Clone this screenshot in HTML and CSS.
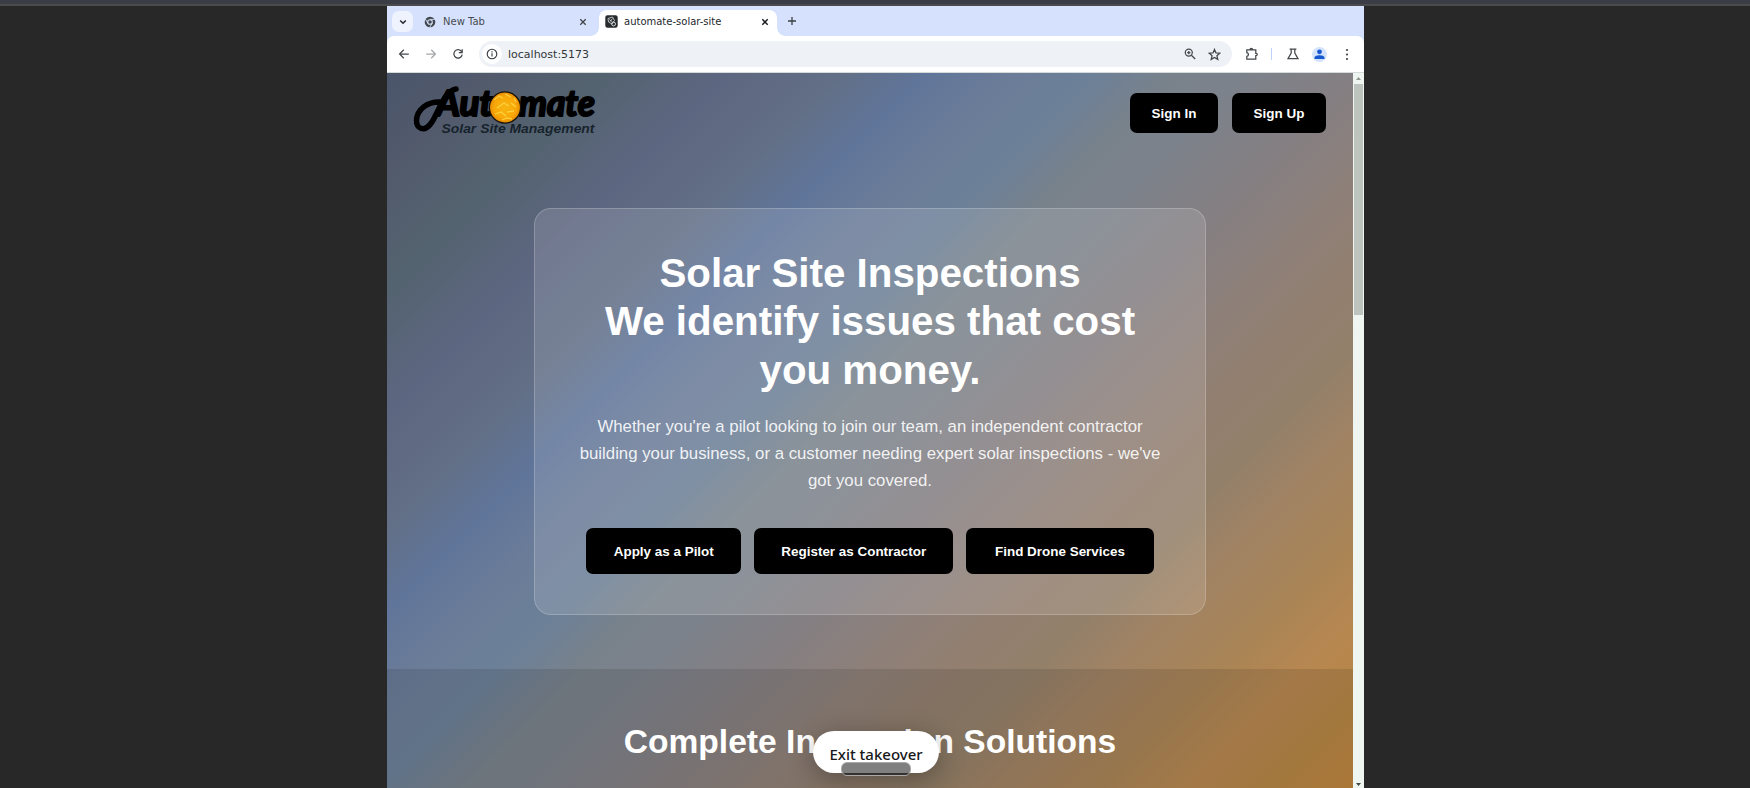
FILE: index.html
```html
<!DOCTYPE html>
<html lang="en">
<head>
<meta charset="utf-8">
<title>automate-solar-site</title>
<link rel="stylesheet" href="styles.css">
</head>
<body>
<div class="top-strip"></div>
<div class="browser">
  <div class="tabs">
    <button class="tab-search"><svg width="8" height="8" viewBox="0 0 8 8"><path d="M1.2 2.5 4 5.3 6.8 2.5"/></svg></button>
    <div class="tab">
      <svg class="fav" width="12" height="12" viewBox="0 0 12 12"><circle cx="6" cy="6" r="5.3" fill="#41474c"/><circle cx="6" cy="6" r="2.3" fill="#41474c" stroke="#d6e2fd" stroke-width="1.1"/><path d="M6 3.4h5M3.8 7.2 1.4 3M8.2 7.2 5.8 11.2" stroke="#d6e2fd" stroke-width=".9"/></svg>
      <span>New Tab</span>
      <svg class="x" width="8" height="8" viewBox="0 0 8 8"><path d="M1.3 1.3 6.7 6.7M6.7 1.3 1.3 6.7"/></svg>
    </div>
    <div class="tab active">
      <svg class="fav" width="13" height="13" viewBox="0 0 13 13"><rect x=".3" y=".3" width="12.4" height="12.4" rx="2.2" fill="#272b2e"/><path d="M3 3.5 7.5 2l2 3.5L7 9 3.5 7zM4.4 4.6l3 2.2M7.4 3.6 5 6.6" fill="none" stroke="#dfe3e5" stroke-width=".8"/><circle cx="8.6" cy="9" r="1.9" fill="none" stroke="#dfe3e5" stroke-width=".9"/></svg>
      <span>automate-solar-site</span>
      <svg class="x" width="8" height="8" viewBox="0 0 8 8"><path d="M1.3 1.3 6.7 6.7M6.7 1.3 1.3 6.7"/></svg>
    </div>
    <svg class="plus" width="10" height="10" viewBox="0 0 10 10"><path d="M5 1v8M1 5h8"/></svg>
  </div>
  <div class="toolbar">
    <svg class="ic" width="12" height="12" viewBox="0 0 12 12"><path d="M10.8 6H1.8M5.8 1.8 1.6 6l4.2 4.2"/></svg>
    <svg class="ic off" width="12" height="12" viewBox="0 0 12 12"><path d="M1.2 6h9M6.2 1.8 10.4 6l-4.2 4.2"/></svg>
    <svg class="ic" width="12" height="12" viewBox="0 0 12 12"><path d="M9.6 3.6A4.2 4.2 0 1 0 10.2 6.6M10.2 1.2v3.4H6.8"/></svg>
    <div class="address">
      <span class="info"><svg width="12" height="12" viewBox="0 0 12 12"><circle cx="6" cy="6" r="4.8"/><path d="M6 5.3v3.2M6 3.3v1.1"/></svg></span>
      <span class="url">localhost:5173</span>
      <svg class="ic" width="12" height="12" viewBox="0 0 12 12"><circle cx="4.8" cy="4.6" r="3.5"/><path d="M7.4 7.2 11.2 11M3.2 4.6h3.2M4.8 3v3.2"/></svg>
      <svg class="ic star" width="13" height="13" viewBox="0 0 13 13"><path d="M6.5 1.4 8 4.9l3.8.3-2.9 2.5.9 3.7-3.3-2-3.3 2 .9-3.7L1.2 5.2 5 4.9z"/></svg>
    </div>
    <svg class="ic puzzle" width="14" height="14" viewBox="0 0 14 14"><path d="M1.8 2.8h9v3.5c2 0 2 2.4 0 2.4v3.5h-9V9.4c2.2-.4 2.2-3.4 0-3.8zM5 2.6c0-1.8 2.6-1.8 2.6 0"/></svg>
    <span class="divider"></span>
    <svg class="ic flask" width="14" height="14" viewBox="0 0 14 14"><path d="M3.6 2h6.8M5.2 2v4L2 11.6h10L8.8 6V2"/></svg>
    <span class="avatar"><svg width="15" height="15" viewBox="0 0 15 15"><circle cx="7.5" cy="4.8" r="2.4"/><path d="M2.5 12V10.8C2.5 9 5.5 8.3 7.5 8.3s5 .7 5 2.5V12z"/></svg></span>
    <svg class="dots" width="4" height="13" viewBox="0 0 4 13"><circle cx="2" cy="2" r="1.1"/><circle cx="2" cy="6.5" r="1.1"/><circle cx="2" cy="11" r="1.1"/></svg>
  </div>
  <div class="viewport">
    <main class="page">
      <header class="nav">
        <svg class="logo" width="184" height="54" viewBox="0 0 184 54">
          <defs><radialGradient id="sun"><stop offset="0" stop-color="#f8b512"/><stop offset=".7" stop-color="#f7a808"/><stop offset="1" stop-color="#e88a00"/></radialGradient></defs>
          <path class="swash" d="M28 17C14 16 4 25 3.5 35c-.3 9 8 12 14 4C25 30 30 6 43 4"/>
          <text class="word" x="23" y="31" textLength="57" lengthAdjust="spacingAndGlyphs">Aut</text>
          <text class="word" x="106" y="31" textLength="76" lengthAdjust="spacingAndGlyphs">mate</text>
          <circle cx="92" cy="22.5" r="15.6" fill="url(#sun)" stroke="#171307" stroke-width="1.3"/>
          <path class="flare" d="M81 15l5-4 4 2M92 9l6 3M84 23l7-5 5 3M98 18l5 4M82 29l6-2 5 4M94 27l7-1M89 35l5-2 5 1M101 13l2 4"/>
          <text class="tag" x="28.500" y="48" textLength="153" lengthAdjust="spacingAndGlyphs">Solar Site Management</text>
        </svg>
        <div class="auth"><button class="btn in">Sign In</button><button class="btn up">Sign Up</button></div>
      </header>
      <section class="card">
        <h1>Solar Site Inspections<br>We identify issues that cost<br>you money.</h1>
        <p>Whether you're a pilot looking to join our team, an independent contractor<br>building your business, or a customer needing expert solar inspections - we've<br>got you covered.</p>
        <div class="actions">
          <button class="btn pilot">Apply as a Pilot</button>
          <button class="btn contractor">Register as Contractor</button>
          <button class="btn drone">Find Drone Services</button>
        </div>
      </section>
      <section class="solutions"><h2>Complete Inspection Solutions</h2></section>
    </main>
    <div class="scrollbar">
      <svg width="11" height="11" viewBox="0 0 11 11"><path d="M3 7 5.500 4 8 7z" fill="#909690"/></svg>
      <div class="thumb"></div>
      <svg class="down" width="11" height="8" viewBox="0 0 11 8"><path d="M3 3h5L5.500 6z" fill="#414541"/></svg>
    </div>
  </div>
</div>
<button class="exit">Exit takeover</button>
<div class="handle"></div>
</body>
</html>
```
FILE: styles.css
```css
* { box-sizing: border-box; }
body { margin: 0; width: 1750px; height: 788px; overflow: hidden; background: #282828; font-family: "Liberation Sans", Arial, sans-serif; }
button { border: 0; padding: 0; font-family: inherit; }
svg { display: block; flex: none; }
.top-strip { height: 6px; background: #3a3c46; border-bottom: 2px solid #4a4a4d; }
.browser { width: 977px; height: 782px; margin-left: 387px; display: flex; flex-direction: column; background: #d6e2fd; font-family: "DejaVu Sans", sans-serif; }

.tabs { height: 30px; display: flex; padding: 4px 0 0 5px; font-size: 10px; color: #474b50; }
.tab-search { width: 21px; height: 21px; margin-top: 1px; border-radius: 7px; background: #eff3fe; display: grid; place-items: center; }
.tab-search path { fill: none; stroke: #25282b; stroke-width: 1.5; }
.tab { display: flex; align-items: center; height: 26px; width: 186px; padding: 0 12px 8px 11px; padding-bottom: 3px; }
.tab .fav { margin-right: 7px; }
.tab .x { margin-left: auto; }
.x path { stroke: #3f4347; stroke-width: 1.3; fill: none; }
.active { position: relative; width: 178px; padding: 0 8px 3px 6px; background: #fff; border-radius: 8px 8px 0 0; color: #25282b; }
.active .fav { margin-right: 6px; }
.active .x path { stroke: #17191b; stroke-width: 1.5; }
.active::before, .active::after { content: ""; position: absolute; bottom: 0; width: 8px; height: 8px; }
.active::before { left: -8px; background: radial-gradient(circle at 0 0, transparent 7.5px, #fff 8px); }
.active::after { right: -8px; background: radial-gradient(circle at 100% 0, transparent 7.5px, #fff 8px); }
.plus { margin: 6px 0 0 10px; }
.plus path { stroke: #3c4043; stroke-width: 1.3; }

.toolbar { height: 37px; display: flex; align-items: center; background: #fff; border-radius: 7px 7px 0 0; border-bottom: 1px solid #d5dadb; padding: 0 15px 0 11px; }
.ic { margin-right: 15px; fill: none; stroke: #44484b; stroke-width: 1.25; }
.off { stroke: #a5a8aa; }
.address { width: 753px; height: 26px; border-radius: 13px; background: #eef1f6; display: flex; align-items: center; padding: 0 10px 0 3px; }
.info { width: 20px; height: 20px; border-radius: 50%; background: #fff; display: grid; place-items: center; fill: none; stroke: #33373a; stroke-width: 1.1; }
.url { margin: 0 auto 0 6px; font-size: 11px; color: #34373a; }
.address .ic { margin-right: 12px; }
.address .star { margin-right: 1px; }
.puzzle { margin: 0 12px 0 13px; }
.divider { width: 1px; height: 12px; background: #bfd3fa; margin-right: 14px; }
.flask { margin-right: 12px; }
.avatar { width: 15px; height: 15px; border-radius: 50%; background: #d3e3fd; fill: #1557cf; margin-right: 18px; }
.avatar svg { overflow: visible; }
.dots { fill: #3f4346; }

.viewport { flex: 1; min-height: 0; display: flex; }
.page { width: 966px; overflow: hidden; font-family: "Liberation Sans", Arial, sans-serif;
  background: linear-gradient(135deg, #4a556a 0%, #525a6c 6%, #546370 13%, #5d6680 20%, #626f86 27%, #60759a 32%, #6b7c98 37%, #6c8098 42%, #79828b 47%, #7c828b 51%, #857f82 58%, #8e8079 64%, #927f70 69%, #93806a 74%, #a18363 79%, #a98456 85%, #b78751 90%, #b58646 95%, #c0853e 100%); }
.nav { height: 134.700px; display: flex; justify-content: space-between; padding: 12px 27px 0 26px; }
.logo { overflow: visible; }
.swash { fill: none; stroke: #000; stroke-width: 5.500; stroke-linecap: round; }
.word { font: italic 700 36px Lato, sans-serif; stroke: #000; stroke-width: 2.200px; stroke-linejoin: round; }
.tag { font: italic 700 13px "Liberation Sans", sans-serif; fill: #17232c; }
.flare { fill: none; stroke: #ffe052; stroke-width: 1.300; opacity: .7; }
.auth { display: flex; gap: 14px; padding-top: 8px; }
.btn { background: #000; color: #fff; font-weight: 700; font-size: 13.440px; border-radius: 7px; }
.auth .btn { height: 40px; }
.in { width: 88px; }
.up { width: 94px; }
.card { width: 672px; height: 407px; margin: 0 auto; border: 1px solid rgba(255,255,255,.2); border-radius: 17px; background: rgba(255,255,255,.13); color: #fff; text-align: center; padding-top: 40.300px; }
h1 { margin: 0 0 20.200px; font-size: 40.320px; line-height: 48.400px; }
p { margin: 0 0 32.800px; font-size: 16.800px; line-height: 26.880px; color: rgba(255,255,255,.9); }
.actions { display: flex; justify-content: center; gap: 13px; }
.actions .btn { height: 46.500px; }
.pilot { width: 155px; }
.contractor { width: 199px; }
.drone { width: 187.500px; }
.solutions { height: 220px; margin-top: 54.300px; padding-top: 53px; background: rgba(0,0,0,.1); text-align: center; }
h2 { margin: 0; font-size: 33.600px; line-height: 40px; color: #fff; }

.scrollbar { width: 11px; background: #eff5f1; display: flex; flex-direction: column; }
.thumb { width: 9px; height: 231px; margin-left: 1px; background: #bcc4bd; }
.down { margin-top: auto; }

.exit { position: absolute; left: 813px; top: 731px; width: 126px; height: 42px; border-radius: 21px; background: #fff; color: #17181a; font: 500 15px "Noto Sans", sans-serif; padding-top: 3px; box-shadow: 0 6px 28px rgba(0,0,0,.32); }
.handle { position: absolute; left: 841px; top: 762px; width: 70px; height: 14px; border-radius: 6px; border: 1px solid #aaa; background: linear-gradient(#808080 0 10px, #34302d 10px); }
```
